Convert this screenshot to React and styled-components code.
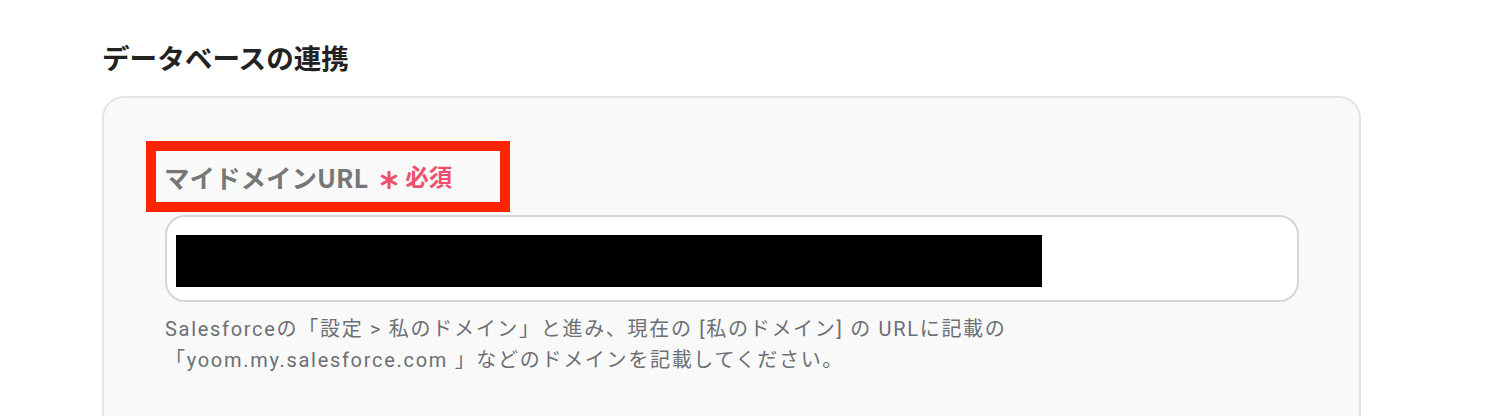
import React from "react";
import styled, { createGlobalStyle } from "styled-components";

const GlobalStyle = createGlobalStyle`
  html, body {
    margin: 0;
    padding: 0;
    background: #ffffff;
    overflow: hidden;
  }
  body {
    font-family: "Inter", "Noto Sans CJK JP", sans-serif;
  }
`;

const Page = styled.div`
  width: 1488px;
  height: 416px;
  padding-left: 102px;
  box-sizing: border-box;
`;

const Heading = styled.h2`
  margin: 37px 0 0;
  font-size: 27.6px;
  line-height: 40px;
  font-weight: 700;
  color: #222222;
  font-family: "Noto Sans CJK JP", sans-serif;
`;

const Card = styled.section`
  margin-top: 19px;
  width: 1259px;
  box-sizing: border-box;
  background: #f9f9f9;
  border: 2px solid #e1e3e7;
  border-radius: 22px;
  padding: 43px 60px 120px 61px;
`;

// red annotation frame drawn around the label
const Highlight = styled.div`
  display: inline-flex;
  align-items: center;
  width: 364px;
  height: 71px;
  box-sizing: border-box;
  margin-left: -19px;
  padding-left: 8px;
  border: 10px solid #ff2400;
`;

const Label = styled.span`
  font-family: "Noto Sans CJK JP", sans-serif;
  font-size: 25.5px;
  font-weight: 700;
  color: #777777;
  line-height: 1;
`;

const Required = styled.span`
  display: inline-flex;
  align-items: center;
  gap: 7px;
  margin-left: 12px;
  font-family: "Noto Sans CJK JP", sans-serif;
  font-size: 23.5px;
  font-weight: 700;
  line-height: 1;
  color: #f0506b;
`;

const Star = styled.svg`
  width: 18px;
  height: 18px;
  position: relative;
  top: 3px;
`;

const InputBox = styled.div`
  margin-top: 3px;
  height: 87px;
  box-sizing: border-box;
  background: #ffffff;
  border: 2px solid #d3d6db;
  border-radius: 20px;
  padding: 18px 9px;
`;

const Redacted = styled.div`
  width: ${(p) => p.w}px;
  height: 52px;
  background: #000000;
`;

const Help = styled.p`
  margin: 12px 0 0;
  font-family: "Roboto", "Noto Sans CJK JP", sans-serif;
  font-size: 20px;
  letter-spacing: 1.7px;
  line-height: 31px;
  color: #6c6f75;
`;

function Asterisk() {
  return (
    <Star viewBox="0 0 18 18" aria-hidden="true">
      <g stroke="currentColor" strokeWidth="3" strokeLinecap="butt">
        <line x1="9" y1="0" x2="9" y2="18" />
        <line x1="1.2" y1="4.5" x2="16.8" y2="13.5" />
        <line x1="1.2" y1="13.5" x2="16.8" y2="4.5" />
      </g>
    </Star>
  );
}

export default function App() {
  return (
    <Page>
      <GlobalStyle />
      <Heading>データベースの連携</Heading>
      <Card>
        <Highlight>
          <Label>マイドメインURL</Label>
          <Required>
            <Asterisk />
            必須
          </Required>
        </Highlight>
        <InputBox>
          <Redacted w={866} />
        </InputBox>
        <Help>
          Salesforceの「設定 &gt; 私のドメイン」と進み、現在の [私のドメイン] の URLに記載の
          <br />
          「yoom.my.salesforce.com 」などのドメインを記載してください。
        </Help>
      </Card>
    </Page>
  );
}
